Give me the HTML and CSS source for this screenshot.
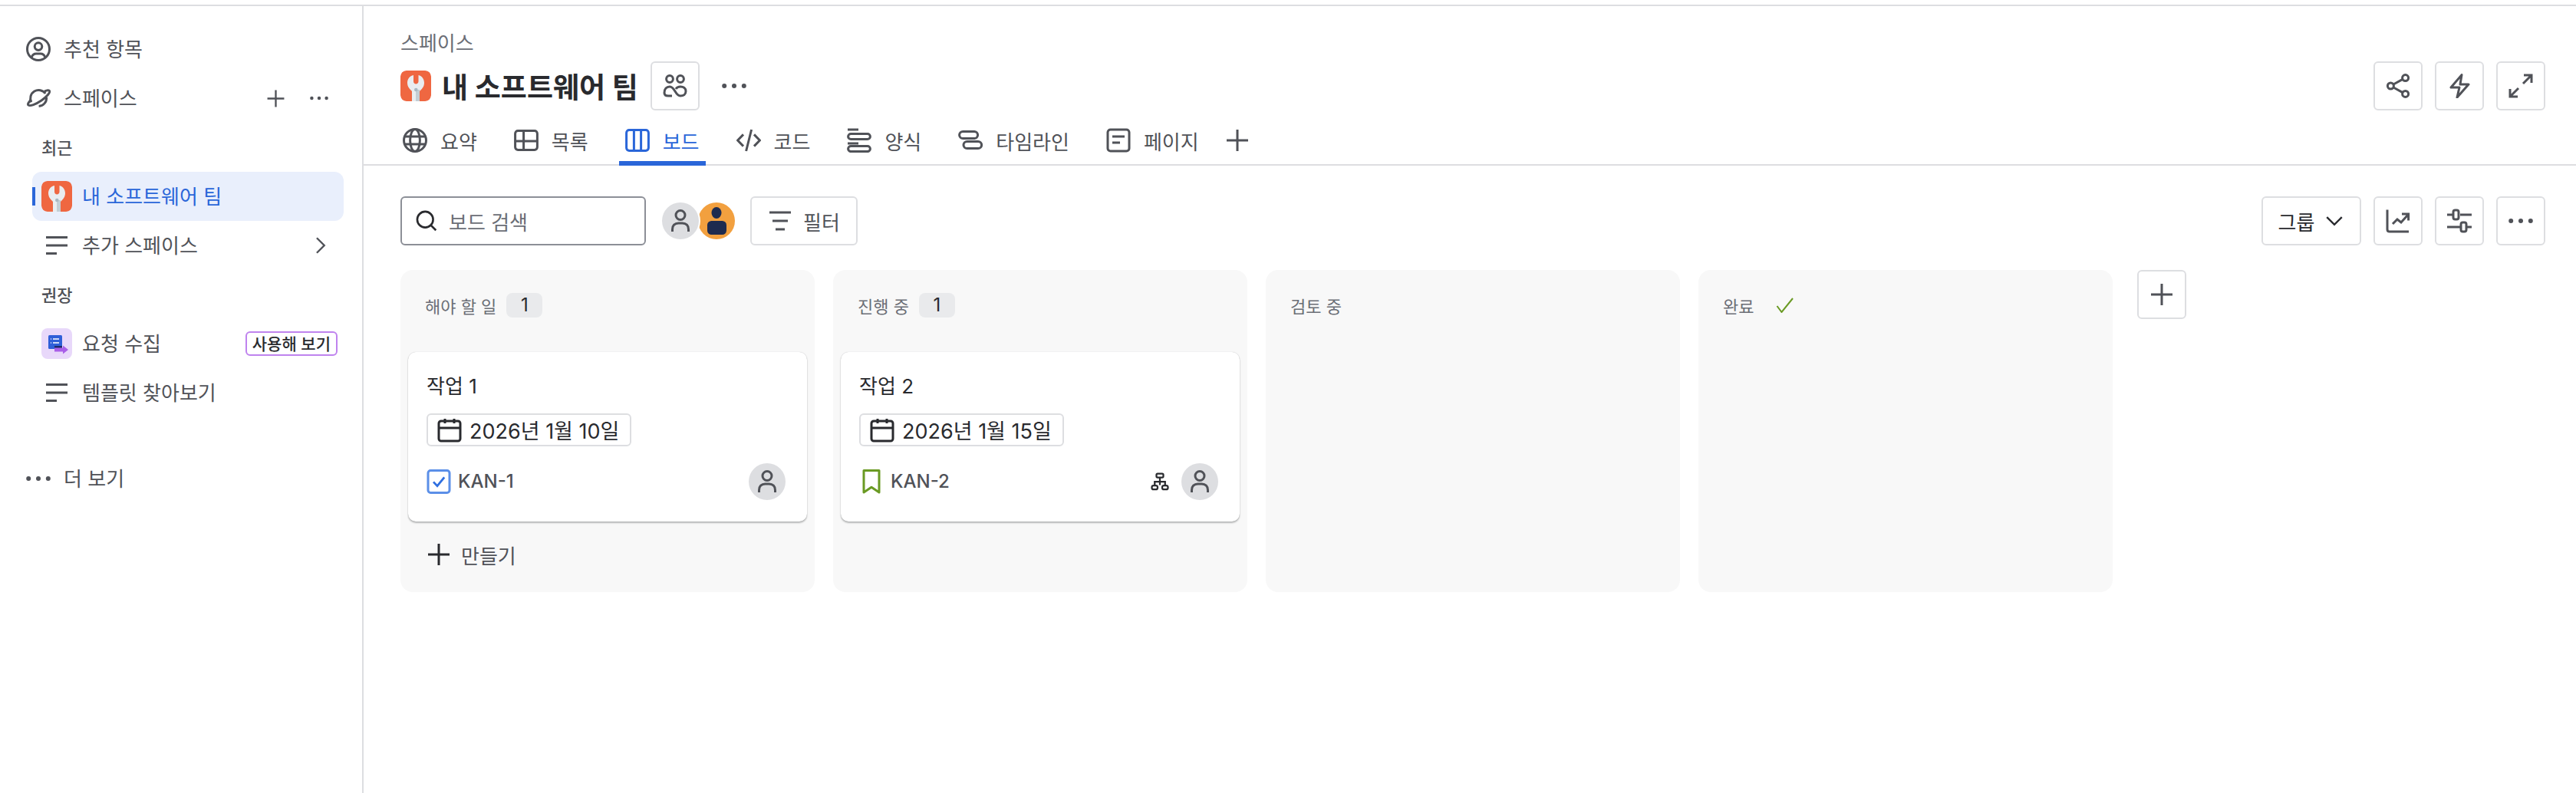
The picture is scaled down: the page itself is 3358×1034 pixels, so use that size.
FILE: index.html
```html
<!DOCTYPE html>
<html lang="ko">
<head>
<meta charset="utf-8">
<title>내 소프트웨어 팀</title>
<link rel="stylesheet" href="styles.css">
</head>
<body>
<svg class="sprite" xmlns="http://www.w3.org/2000/svg">
  <symbol id="i-user-c" viewBox="0 0 16 16"><circle cx="8" cy="8" r="7.25"/><circle cx="8" cy="6.3" r="2.4"/><path d="M3.6 13.4c.5-1.6 1.6-2.4 3-2.4h2.8c1.4 0 2.5.8 3 2.4"/></symbol>
  <symbol id="i-planet" viewBox="0 0 16 16"><path d="M3.4 10.6A5.4 5.4 0 0 1 12.6 5"/><path d="M13.3 7.5a5.4 5.4 0 0 1-5 5.8"/><path d="M12 3.6c1.8-.9 3-.9 3.3-.3.5 1-1.8 3.8-5.3 6.2-3.6 2.500-7.500 3.900-8.500 3-.7-.6.200-2 1.700-3.400"/></symbol>
  <symbol id="i-plus" viewBox="0 0 16 16"><path d="M8 1v14M1 8h14"/></symbol>
  <symbol id="i-dots" viewBox="0 0 16 16"><circle class="f" cx="1.600" cy="8" r="1.500"/><circle class="f" cx="8" cy="8" r="1.500"/><circle class="f" cx="14.400" cy="8" r="1.500"/></symbol>
  <symbol id="i-lines" viewBox="0 0 28 24"><path d="M0 1.500h28M0 12h28M0 22.500h14" stroke-width="3"/></symbol>
  <symbol id="i-filter" viewBox="0 0 16 16"><path d="M1 2.500h14M3 8h10M5 13.500h6"/></symbol>
  <symbol id="i-chev-r" viewBox="0 0 16 16"><path d="M5.500 2l6 6-6 6"/></symbol>
  <symbol id="i-chev-d" viewBox="0 0 16 16"><path d="M2 5l6 6 6-6"/></symbol>
  <symbol id="i-team" viewBox="0 0 16 16"><circle cx="4.500" cy="3.500" r="2.200"/><circle cx="11.500" cy="3.500" r="2.200"/><path d="M1 12.500C1 10 2.500 8.500 4.500 8.500 8 8.500 8 14.500 11.500 14.500 13.500 14.500 15 13.500 15 11.500 15 9.500 13.500 8.500 11.500 8.500 10 8.500 9 9.200 8.500 10M1 12.500C1 13.800 2 14.500 3.500 14.500H6"/></symbol>
  <symbol id="i-globe" viewBox="0 0 16 16"><circle cx="8" cy="8" r="7.250"/><ellipse cx="8" cy="8" rx="3.200" ry="7.250"/><path d="M1 5.500h14M1 10.500h14"/></symbol>
  <symbol id="i-table" viewBox="0 0 16 16"><rect x=".8" y="1.800" width="14.400" height="12.400" rx="1.800"/><path d="M.8 8.500h14.400M6.300 1.800v12.400"/></symbol>
  <symbol id="i-board" viewBox="0 0 16 16"><rect x=".8" y="1.300" width="14.400" height="13.400" rx="1.800"/><path d="M5.700 1.300v13.400M10.300 1.300v13.400"/></symbol>
  <symbol id="i-code" viewBox="0 0 16 16"><path d="M4.500 4.200L.8 8l3.700 3.800M11.500 4.200L15.200 8l-3.700 3.800M9.800 1L6.300 15"/></symbol>
  <symbol id="i-form" viewBox="0 0 16 16"><path d="M.5 1h7"/><rect x=".8" y="3.700" width="14.400" height="3.600" rx="1.800"/><path d="M.5 10h7"/><rect x=".8" y="11.700" width="14.400" height="3.600" rx="1.800"/></symbol>
  <symbol id="i-timeline" viewBox="0 0 16 16"><rect x=".8" y="2.200" width="12" height="4.600" rx="2.300"/><rect x="3.500" y="8.700" width="11.800" height="4.600" rx="2.300"/></symbol>
  <symbol id="i-page" viewBox="0 0 16 16"><rect x="1" y="1" width="14" height="14" rx="1.800"/><path d="M4 5.500h8M4 9.500h5"/></symbol>
  <symbol id="i-search" viewBox="0 0 16 16"><circle cx="7" cy="7" r="5.900"/><path d="M11.200 11.200L15 15"/></symbol>
  <symbol id="i-cal" viewBox="0 0 16 16"><rect x="1" y="2" width="14" height="13" rx="1.500"/><path d="M1 6.500h14M5 .5v3M11 .5v3"/></symbol>
  <symbol id="i-sub" viewBox="0 0 16 16"><rect x="5" y="1" width="6" height="3.400" rx="1"/><rect x="1" y="11.400" width="5" height="3.400" rx="1.500"/><rect x="10" y="11.400" width="5" height="3.400" rx="1.500"/><path d="M8 4.400V11M3.500 11.400V8h9v3.400"/></symbol>
  <symbol id="i-share" viewBox="0 0 16 16"><circle cx="3.200" cy="8" r="2"/><circle cx="12.800" cy="2.800" r="2"/><circle cx="12.800" cy="13.200" r="2"/><path d="M5 7l6-3.300M5 9l6 3.300"/></symbol>
  <symbol id="i-bolt" viewBox="0 0 16 16"><path d="M9.500.8L2.500 9h5.500l-1.500 6.500L14 7H8.500z" stroke-linejoin="round"/></symbol>
  <symbol id="i-expand" viewBox="0 0 16 16"><path d="M10 1h5v5M15 1L9.500 6.500M6 15H1v-5M1 15l5.500-5.500"/></symbol>
  <symbol id="i-chart" viewBox="0 0 16 16"><path d="M1 .8V13.500c0 .9.600 1.500 1.500 1.500H15"/><path d="M4.500 10l3-3 2.500 2 4.500-5M10.500 3.500h4.300v4.300"/></symbol>
  <symbol id="i-sliders" viewBox="0 0 16 16"><path d="M0 4h3.500M8.500 4H16M0 12h8.500M13 12h3"/><rect x="4" y="1" width="3.500" height="6" rx="1.200"/><rect x="9" y="9" width="3.500" height="6" rx="1.200"/></symbol>
  <symbol id="i-person" viewBox="0 0 24 30"><circle cx="12" cy="7.500" r="6" stroke-width="3"/><path d="M1.500 29v-3c0-5 3-8 8-8h5c5 0 8 3 8 8v3" stroke-width="3"/></symbol>
  <symbol id="i-wrench" viewBox="0 0 40 40"><rect class="wr-bg" width="40" height="40" rx="7"/><path class="wr-head" d="M17 6C12 7 9 11 9 16 9 21 12 24 15 27V40H25V27C28 24 31 21 31 16 31 11 28 7 23.500 6V14C23.500 16 22 17.500 20.200 17.500 18.500 17.500 17 16 17 14Z"/><path class="wr-shaft" d="M20 25h5v15h-5z"/><circle class="wr-pin" cx="20.300" cy="25" r="2.300"/></symbol>
</svg>

<div class="topline"></div>
<div class="app">
  <aside class="sidebar">
    <div class="row"><svg class="ic"><use href="#i-user-c"/></svg><span class="lbl">추천 항목</span></div>
    <div class="row"><svg class="ic"><use href="#i-planet"/></svg><span class="lbl">스페이스</span>
      <span class="row-actions"><svg class="ic-plus"><use href="#i-plus"/></svg><svg class="ic-dots"><use href="#i-dots"/></svg></span></div>
    <div class="section">최근</div>
    <div class="row sub active"><span class="bar"></span><svg class="sq"><use href="#i-wrench"/></svg><span class="lbl">내 소프트웨어 팀</span></div>
    <div class="row sub"><svg class="ic-lines"><use href="#i-lines"/></svg><span class="lbl">추가 스페이스</span><svg class="ic-chev"><use href="#i-chev-r"/></svg></div>
    <div class="section">권장</div>
    <div class="row sub"><span class="sq req"><svg viewBox="0 0 40 40" class="req-svg"><rect x="9" y="9" width="18" height="18" rx="1.500" fill="#2f5fd8"/><rect x="17" y="23" width="10" height="4" fill="#1c2b6b"/><path d="M17 25.500h11v-3l7 5.500-7 5.500v-3H17z" fill="#a95fe8"/><path d="M15 14h8M15 19h8M12 14h1M12 19h1" stroke="#fff" stroke-width="1.500"/></svg></span><span class="lbl">요청 수집</span><span class="try">사용해 보기</span></div>
    <div class="row sub"><svg class="ic-lines"><use href="#i-lines"/></svg><span class="lbl">템플릿 찾아보기</span></div>
    <div class="row more"><svg class="ic"><use href="#i-dots"/></svg><span class="lbl">더 보기</span></div>
  </aside>

  <main class="main">
    <header class="head">
      <div class="crumb">스페이스</div>
      <div class="title-row">
        <svg class="sq"><use href="#i-wrench"/></svg>
        <h1 class="title">내 소프트웨어 팀</h1>
        <button class="btn sq64"><svg class="ic"><use href="#i-team"/></svg></button>
        <svg class="title-dots"><use href="#i-dots"/></svg>
        <div class="actions">
          <button class="btn sq64"><svg class="ic"><use href="#i-share"/></svg></button>
          <button class="btn sq64"><svg class="ic"><use href="#i-bolt"/></svg></button>
          <button class="btn sq64"><svg class="ic"><use href="#i-expand"/></svg></button>
        </div>
      </div>
      <nav class="tabs">
        <a class="tab"><svg class="ic"><use href="#i-globe"/></svg>요약</a>
        <a class="tab"><svg class="ic"><use href="#i-table"/></svg>목록</a>
        <a class="tab on"><svg class="ic"><use href="#i-board"/></svg>보드</a>
        <a class="tab"><svg class="ic"><use href="#i-code"/></svg>코드</a>
        <a class="tab"><svg class="ic"><use href="#i-form"/></svg>양식</a>
        <a class="tab"><svg class="ic"><use href="#i-timeline"/></svg>타임라인</a>
        <a class="tab"><svg class="ic"><use href="#i-page"/></svg>페이지</a>
        <svg class="ic tab-plus"><use href="#i-plus"/></svg>
      </nav>
    </header>

    <section class="toolbar">
      <div class="search"><svg class="ic-search"><use href="#i-search"/></svg><span>보드 검색</span></div>
      <div class="avatars">
        <span class="avatar ring"><svg class="ic-person"><use href="#i-person"/></svg></span>
        <span class="avatar orange"><svg viewBox="0 0 48 48" class="me"><ellipse cx="24" cy="13.500" rx="6.500" ry="7.500" fill="#1e2b4f"/><rect x="12" y="24" width="25" height="18" rx="5.500" fill="#1e2b4f"/></svg></span>
      </div>
      <button class="btn filter"><svg class="ic"><use href="#i-filter"/></svg>필터</button>
      <div class="actions">
        <button class="btn group">그룹<svg class="ic-chev-d"><use href="#i-chev-d"/></svg></button>
        <button class="btn sq64"><svg class="ic"><use href="#i-chart"/></svg></button>
        <button class="btn sq64"><svg class="ic"><use href="#i-sliders"/></svg></button>
        <button class="btn sq64"><svg class="ic"><use href="#i-dots"/></svg></button>
      </div>
    </section>

    <section class="board">
      <div class="col">
        <div class="col-head"><span>해야 할 일</span><span class="count">1</span></div>
        <article class="card">
          <div class="card-title">작업 1</div>
          <div class="date"><svg class="ic"><use href="#i-cal"/></svg>2026년 1월 10일</div>
          <div class="card-foot">
            <svg class="type" viewBox="0 0 16 16"><rect x="1" y=".8" width="14" height="14.400" rx="1.600" fill="none" stroke="#5b8fe8" stroke-width="1.500"/><path d="M4.500 8.200l2.500 2.600 4.600-5.600" fill="none" stroke="#2f6fe0" stroke-width="1.400"/></svg>
            <span class="key">KAN-1</span>
            <span class="avatar push"><svg class="ic-person"><use href="#i-person"/></svg></span>
          </div>
        </article>
        <div class="create"><svg class="ic"><use href="#i-plus"/></svg>만들기</div>
      </div>
      <div class="col">
        <div class="col-head"><span>진행 중</span><span class="count">1</span></div>
        <article class="card">
          <div class="card-title">작업 2</div>
          <div class="date"><svg class="ic"><use href="#i-cal"/></svg>2026년 1월 15일</div>
          <div class="card-foot">
            <svg class="type" viewBox="0 0 16 16"><path d="M3 .8h10v14.200l-5-3.400-5 3.400z" fill="none" stroke="#6a9a23" stroke-width="1.500" stroke-linejoin="round"/></svg>
            <span class="key">KAN-2</span>
            <svg class="ic-sub push"><use href="#i-sub"/></svg>
            <span class="avatar"><svg class="ic-person"><use href="#i-person"/></svg></span>
          </div>
        </article>
      </div>
      <div class="col"><div class="col-head"><span>검토 중</span></div></div>
      <div class="col"><div class="col-head"><span>완료</span><svg class="done" viewBox="0 0 24 20"><path d="M1.500 11l6 8L22 1" fill="none" stroke="#6a9a23" stroke-width="2"/></svg></div></div>
      <button class="btn sq64 add"><svg class="ic"><use href="#i-plus"/></svg></button>
    </section>
  </main>
</div>
</body>
</html>
```
FILE: styles.css
```css
* { box-sizing: border-box; }
html, body { margin: 0; height: 100%; }
body {
  font-family: "Inter", "Noto Sans CJK KR", "Noto Sans", sans-serif;
  font-size: 26px;
  color: #292a2e;
  background: #fff;
  overflow: hidden;
}
.sprite { display: none; }
svg { fill: none; stroke: currentColor; stroke-width: 1.5; flex: none; display: block; }
.f { fill: currentColor; stroke: none; }
.wr-bg { fill: #ef6741; stroke: none; }
.wr-head { fill: #e9edf0; stroke: none; }
.wr-shaft { fill: #c3ced5; stroke: none; }
.wr-pin { fill: #a9b8c2; stroke: none; }

.topline { height: 8px; border-bottom: 2px solid #dddee1; }
.app { display: flex; height: 1026px; }

/* Sidebar */
.sidebar {
  width: 474px;
  flex: none;
  border-right: 2px solid #dddee1;
  padding: 24px 24px 0 34px;
  color: #505258;
}
.row { display: flex; align-items: center; height: 64px; }
.ic { width: 32px; height: 32px; }
.lbl { margin-left: 17px; padding-bottom: 3px; white-space: nowrap; }
.row-actions { margin-left: auto; display: flex; align-items: center; gap: 32px; margin-right: 20px; }
.ic-plus { width: 25px; height: 25px; }
.ic-dots { width: 24px; height: 24px; }
.section { height: 64px; display: flex; align-items: center; padding: 0 0 3px 20px; font-size: 22px; font-weight: 500; color: #505258; }
.row.sub { margin-left: 8px; padding-left: 12px; width: 406px; position: relative; border-radius: 12px; }
.row.sub .lbl { margin-left: 13px; }
.row.active { background: #e9effc; color: #2a66d9; }
.bar { position: absolute; left: 0; top: 20px; width: 4px; height: 24px; background: #2a66d9; }
.sq { width: 40px; height: 40px; border-radius: 8px; }
.ic-lines { width: 28px; height: 24px; margin: 0 6px; }
.ic-chev { width: 26px; height: 26px; margin-left: auto; margin-right: 18px; }
.req { background: #e8d8fa; display: flex; }
.req-svg { width: 40px; height: 40px; stroke: none; }
.try {
  margin-left: auto;
  margin-right: 8px;
  height: 32px;
  padding: 0 7px 2px;
  display: flex;
  align-items: center;
  border: 2px solid #bf83ee;
  border-radius: 6px;
  font-size: 21px;
  font-weight: 500;
  color: #292a2e;
  white-space: nowrap;
}
.more { margin-top: 48px; }

/* Main */
.main { flex: 1; min-width: 0; padding: 0 40px 0 48px; }
.head { padding-top: 33px; }
.crumb { height: 32px; line-height: 32px; color: #6b6e76; margin-bottom: 7px; }
.title-row { display: flex; align-items: center; height: 64px; }
.title { margin: 0 16px 0 14px; font-size: 37px; font-weight: 700; white-space: nowrap; }
.btn {
  font: inherit;
  color: #505258;
  background: #fff;
  border: 2px solid #dddee1;
  border-radius: 6px;
  padding: 0;
  height: 64px;
  display: flex;
  align-items: center;
  justify-content: center;
}
.sq64 { width: 64px; flex: none; }
.title-dots { width: 32px; height: 32px; margin-left: 29px; color: #505258; }
.actions { margin-left: auto; display: flex; gap: 16px; }

.tabs {
  display: flex;
  align-items: flex-start;
  gap: 32px;
  height: 72px;
  margin: 0 -40px 0 -48px;
  padding: 8px 0 0 43px;
  border-bottom: 2px solid #dddee1;
  color: #505258;
}
.tab {
  display: flex;
  align-items: center;
  gap: 17px;
  height: 64px;
  padding: 4px 8px 0;
  border-bottom: 6px solid transparent;
  white-space: nowrap;
}
.tab.on { color: #2a66d9; border-bottom-color: #2a66d9; }
.tab-plus { margin: 15px 0 0 -6px; }

.toolbar { display: flex; align-items: center; margin-top: 40px; height: 64px; }
.search {
  width: 320px;
  height: 64px;
  border: 2px solid #8c8f97;
  border-radius: 6px;
  display: flex;
  align-items: center;
  padding-left: 18px;
  gap: 15px;
  color: #6b6e76;
}
.ic-search { width: 28px; height: 28px; color: #292a2e; }
.avatars { display: flex; margin-left: 21px; }
.avatar {
  width: 48px;
  height: 48px;
  border-radius: 50%;
  background: #dddee1;
  display: flex;
  align-items: center;
  justify-content: center;
  color: #505258;
  flex: none;
}
.ring { position: relative; z-index: 1; box-shadow: 0 0 0 2px #fff; }
.orange { background: #f2a03f; margin-left: -1px; overflow: hidden; }
.me { width: 48px; height: 48px; stroke: none; }
.ic-person { width: 24px; height: 30px; }
.filter { margin-left: 20px; width: 140px; gap: 14px; }
.group { width: 130px; gap: 13px; color: #292a2e; }
.ic-chev-d { width: 26px; height: 26px; }

.board { display: flex; align-items: flex-start; gap: 24px; margin-top: 32px; }
.col {
  width: 540px;
  height: 420px;
  background: #f8f8f8;
  border-radius: 16px;
  padding: 0 10px;
  flex: none;
}
.col-head {
  display: flex;
  align-items: center;
  height: 107px;
  padding: 0 22px 16px;
  gap: 13px;
  font-size: 22px;
  color: #6b6e76;
}
.count {
  display: flex;
  align-items: center;
  justify-content: center;
  width: 47px;
  height: 32px;
  border-radius: 8px;
  background: #e9eaec;
  color: #292a2e;
  font-size: 24px;
}
.done { width: 24px; height: 20px; margin-left: 16px; stroke: none; }
.card {
  height: 221px;
  background: #fff;
  border-radius: 10px;
  box-shadow: 0 2px 2px rgba(30, 31, 33, .28), 0 0 1px rgba(30, 31, 33, .3);
  padding: 25px 28px 0 24px;
}
.card-title { height: 40px; line-height: 40px; }
.date {
  display: inline-flex;
  align-items: center;
  gap: 10px;
  height: 43px;
  margin-top: 15px;
  padding: 0 14px 0 12px;
  border: 2px solid #dddee1;
  border-radius: 6px;
  font-size: 27px;
  white-space: nowrap;
}
.card-foot { display: flex; align-items: center; height: 48px; margin-top: 21px; }
.type { width: 32px; height: 32px; }
.key { margin-left: 9px; font-size: 24px; font-weight: 500; color: #505258; }
.push { margin-left: auto; }
.ic-sub { width: 24px; height: 24px; margin-right: 16px; color: #292a2e; }
.create { display: flex; align-items: center; gap: 13px; height: 64px; margin-top: 11px; padding-left: 24px; color: #505258; }
.create .ic { color: #292a2e; }
.add { margin-left: 8px; }
```
